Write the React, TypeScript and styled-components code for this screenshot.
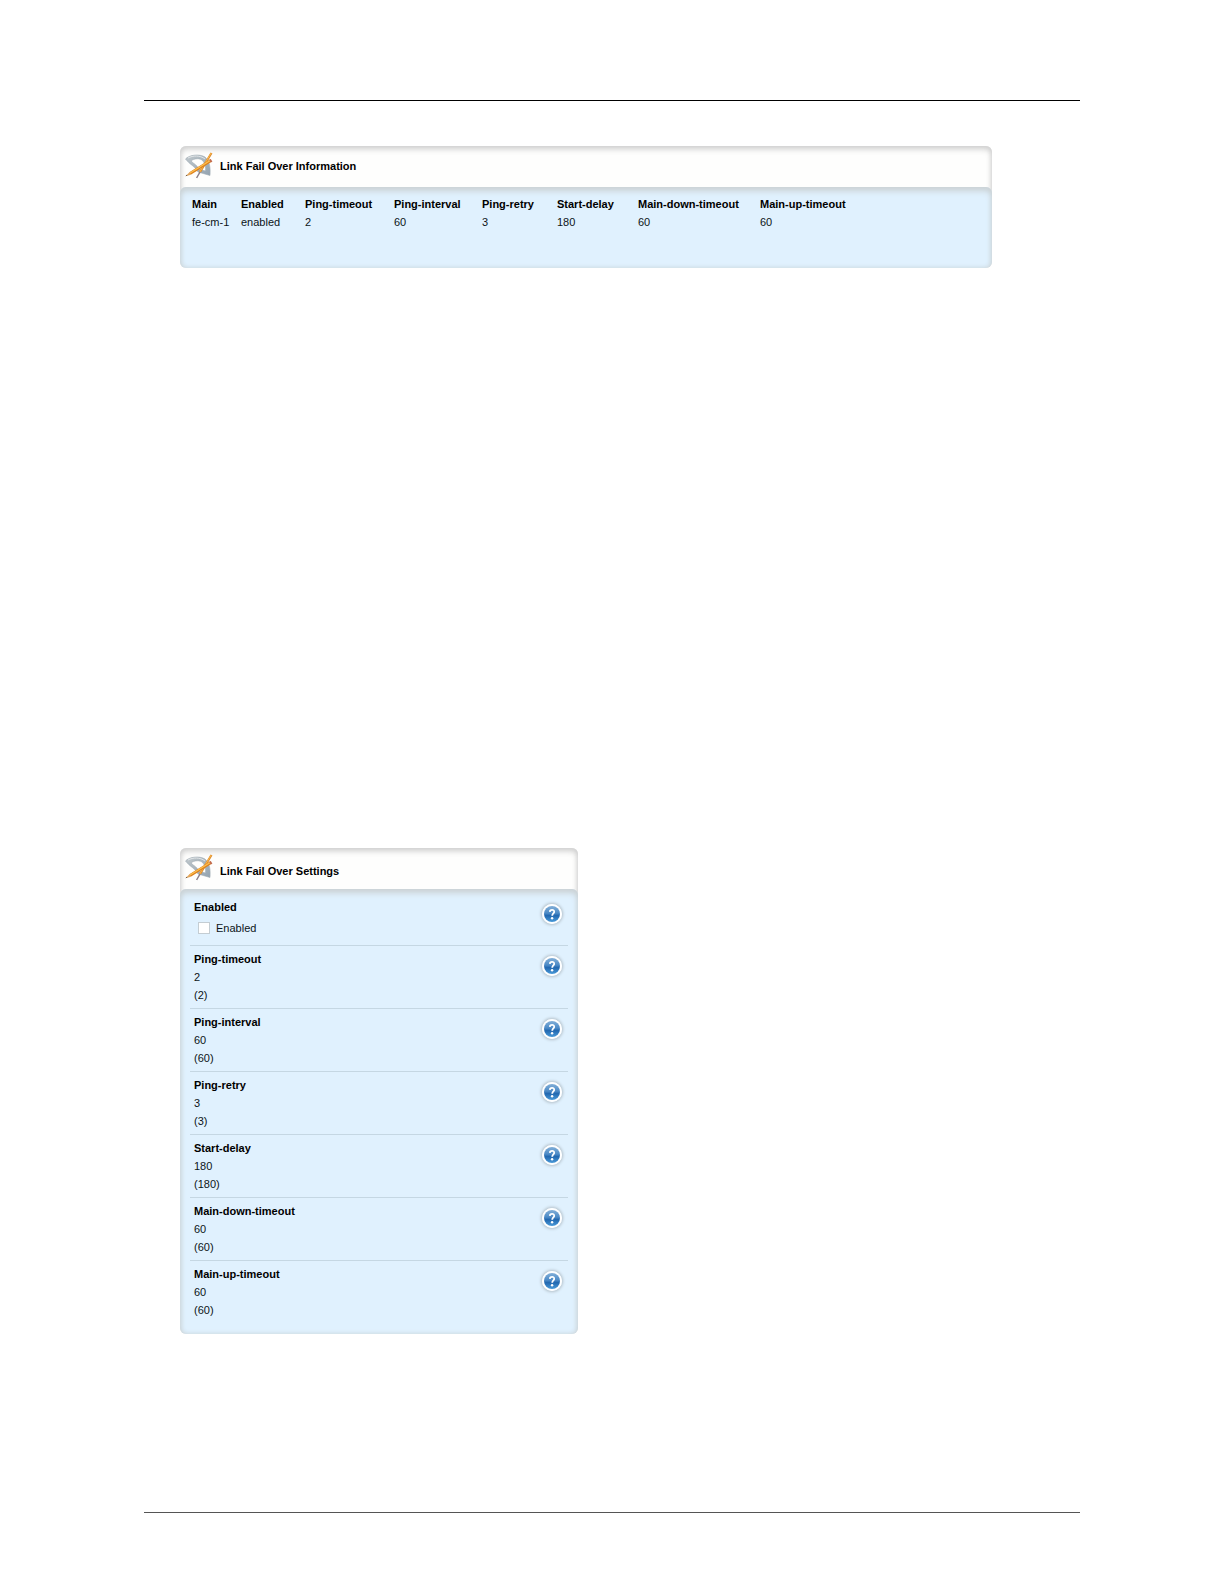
import React from "react";
import styled, { createGlobalStyle } from "styled-components";

const GlobalStyle = createGlobalStyle`
  *, *::before, *::after { box-sizing: border-box; }
  body {
    margin: 0;
    background: #ffffff;
    color: #0c1418;
    font-family: "Liberation Sans", Arial, sans-serif;
    font-size: 11px;
    line-height: 18px;
  }
`;

const Page = styled.main`
  display: flex;
  flex-direction: column;
  padding: 100px 144px 70px;
`;

const Rule = styled.hr<{ $color: string }>`
  width: 100%;
  height: 1px;
  margin: 0;
  border: 0;
  background: ${(p) => p.$color};
`;

const Content = styled.div`
  display: flex;
  flex-direction: column;
  gap: 580px;
  padding: 45px 0 178px 36px;
`;

const Panel = styled.section<{ $maxWidth: number }>`
  width: 100%;
  max-width: ${(p) => p.$maxWidth}px;
  border-radius: 6px;
  overflow: hidden;
  background: #fefefd;
  box-shadow: inset 0 3px 6px #d0d0d0, inset 0 0 5px #d2d2d2;
`;

const PanelHeader = styled.header<{ $top: number }>`
  display: flex;
  align-items: flex-start;
  gap: 5px;
  height: 41px;
  padding: 5px 4px 0;

  h2 {
    margin: ${(p) => p.$top}px 0 0;
    color: #000000;
    font-size: 11px;
    line-height: 18px;
  }
`;

const PanelBody = styled.div<{ $top: number; $bottom: number }>`
  padding: ${(p) => p.$top}px 10px ${(p) => p.$bottom}px;
  border-radius: 6px;
  background: #e0f1fe;
  box-shadow: inset 0 4px 6px #cbd2d5, inset 0 0 5px #cad5da;
`;

const InfoTable = styled.table`
  width: 100%;
  border-collapse: collapse;
  table-layout: fixed;

  th, td {
    padding: 0 0 0 2px;
    text-align: left;
    white-space: nowrap;
  }
  th { color: #000000; }
`;

const Column = styled.col<{ $width?: number }>`
  width: ${(p) => (p.$width ? `${p.$width}px` : "auto")};
`;

const Setting = styled.div`
  display: flex;
  justify-content: space-between;
  align-items: flex-start;
  padding: 4px;

  & + & { border-top: 1px solid #c5d7e3; }
`;

const SettingText = styled.div`
  h3, p { margin: 0; font-size: 11px; line-height: 18px; }
  h3 { color: #000000; }
`;

const CheckLabel = styled.label`
  display: flex;
  align-items: center;
  gap: 6px;
  padding: 3px 0 4px 4px;
`;

const Checkbox = styled.input`
  appearance: none;
  width: 12px;
  height: 12px;
  margin: 0;
  border: 1px solid #c4cdd3;
  background: #ffffff;

  &:checked { background: #2f7fc4; }
`;

const HelpButton = styled.button`
  display: flex;
  margin: 6px 2px 0 0;
  padding: 0;
  border: 0;
  border-radius: 50%;
  background: none;
  box-shadow: 0 0 3px 1px #b3c0c9;
  cursor: pointer;
`;

function ToolsIcon() {
  return (
    <svg width="31" height="29" viewBox="0 0 31 29" aria-hidden="true">
      <defs>
        <linearGradient id="protractor" x1="0" y1="0" x2="1" y2="1">
          <stop offset="0" stopColor="#c0c8cc" />
          <stop offset="1" stopColor="#93a3b0" />
        </linearGradient>
      </defs>
      <path
        fillRule="evenodd"
        fill="url(#protractor)"
        stroke="#a0abb3"
        strokeWidth="0.6"
        d="M1.5 8 C5 4 15 2.5 21 6 C26 10 26.5 17 26 24.5 L14 21 C11 15 6 14 1.5 8 Z M7 10 C10 7.5 16 6.5 19 10 C21 12.5 22 16 21.5 20 L15 18 C13 14 10 13 7 10 Z"
      />
      <path d="M4 7 C9 4.4 16 4 21 8" fill="none" stroke="#e2e6e8" strokeWidth="1" />
      <path d="M27.5 2 L16 21" stroke="#d98a2c" strokeWidth="2.2" />
      <path d="M27.2 2 L15.8 21" stroke="#ffb648" strokeWidth="1" />
      <path d="M16 21 L12.6 27" stroke="#8b7d86" strokeWidth="1.5" />
      <path d="M27 9.5 L6 22.5" stroke="#db8120" strokeWidth="2.8" />
      <path d="M26.6 9.2 L6 22" stroke="#ffbf4c" strokeWidth="1.3" />
      <path d="M26 8.4 L27.6 11" stroke="#c06a50" strokeWidth="1.8" />
      <path d="M5.4 21.2 L1.5 25.2 L7 23.8 Z" fill="#e3a65c" />
      <path d="M1.5 25.2 L2.8 23.8 L3.4 24.7 Z" fill="#51463f" />
    </svg>
  );
}

function HelpIcon() {
  return (
    <svg width="20" height="20" viewBox="0 0 20 20" aria-hidden="true">
      <defs>
        <linearGradient id="help-blue" x1="0" y1="0" x2="0" y2="1">
          <stop offset="0" stopColor="#82afd8" />
          <stop offset="0.45" stopColor="#4c8ac6" />
          <stop offset="0.6" stopColor="#2268b0" />
          <stop offset="1" stopColor="#4a9ad8" />
        </linearGradient>
      </defs>
      <circle cx="10" cy="10" r="10" fill="#ffffff" />
      <circle cx="10" cy="10" r="8" fill="url(#help-blue)" />
      <path
        d="M7.8 7.9 C8 5.2 12.4 5.3 12.2 7.9 C12.1 9.5 10.3 9.5 10.2 11.8"
        fill="none"
        stroke="#ffffff"
        strokeWidth="1.8"
      />
      <circle cx="10.1" cy="14.2" r="1.2" fill="#ffffff" />
    </svg>
  );
}

function Help({ topic }: { topic: string }) {
  return (
    <HelpButton type="button" aria-label={`Help: ${topic}`}>
      <HelpIcon />
    </HelpButton>
  );
}

const columns = [
  { name: "Main", value: "fe-cm-1", width: 49 },
  { name: "Enabled", value: "enabled", width: 64 },
  { name: "Ping-timeout", value: "2", width: 89 },
  { name: "Ping-interval", value: "60", width: 88 },
  { name: "Ping-retry", value: "3", width: 75 },
  { name: "Start-delay", value: "180", width: 81 },
  { name: "Main-down-timeout", value: "60", width: 122 },
  { name: "Main-up-timeout", value: "60" },
];

const settings = [
  { name: "Ping-timeout", value: "2" },
  { name: "Ping-interval", value: "60" },
  { name: "Ping-retry", value: "3" },
  { name: "Start-delay", value: "180" },
  { name: "Main-down-timeout", value: "60" },
  { name: "Main-up-timeout", value: "60" },
];

export default function App() {
  return (
    <>
      <GlobalStyle />
      <Page>
        <Rule $color="#000000" />
        <Content>
          <Panel $maxWidth={812}>
            <PanelHeader $top={6}>
              <ToolsIcon />
              <h2>Link Fail Over Information</h2>
            </PanelHeader>
            <PanelBody $top={8} $bottom={37}>
              <InfoTable>
                <colgroup>
                  {columns.map((c) => (
                    <Column key={c.name} $width={c.width} />
                  ))}
                </colgroup>
                <thead>
                  <tr>
                    {columns.map((c) => (
                      <th key={c.name} scope="col">{c.name}</th>
                    ))}
                  </tr>
                </thead>
                <tbody>
                  <tr>
                    {columns.map((c) => (
                      <td key={c.name}>{c.value}</td>
                    ))}
                  </tr>
                </tbody>
              </InfoTable>
            </PanelBody>
          </Panel>

          <Panel $maxWidth={398}>
            <PanelHeader $top={9}>
              <ToolsIcon />
              <h2>Link Fail Over Settings</h2>
            </PanelHeader>
            <PanelBody $top={5} $bottom={11}>
              <Setting>
                <SettingText>
                  <h3>Enabled</h3>
                  <CheckLabel>
                    <Checkbox type="checkbox" />
                    Enabled
                  </CheckLabel>
                </SettingText>
                <Help topic="Enabled" />
              </Setting>
              {settings.map((s) => (
                <Setting key={s.name}>
                  <SettingText>
                    <h3>{s.name}</h3>
                    <p>{s.value}</p>
                    <p>({s.value})</p>
                  </SettingText>
                  <Help topic={s.name} />
                </Setting>
              ))}
            </PanelBody>
          </Panel>
        </Content>
        <Rule $color="#555555" />
      </Page>
    </>
  );
}
